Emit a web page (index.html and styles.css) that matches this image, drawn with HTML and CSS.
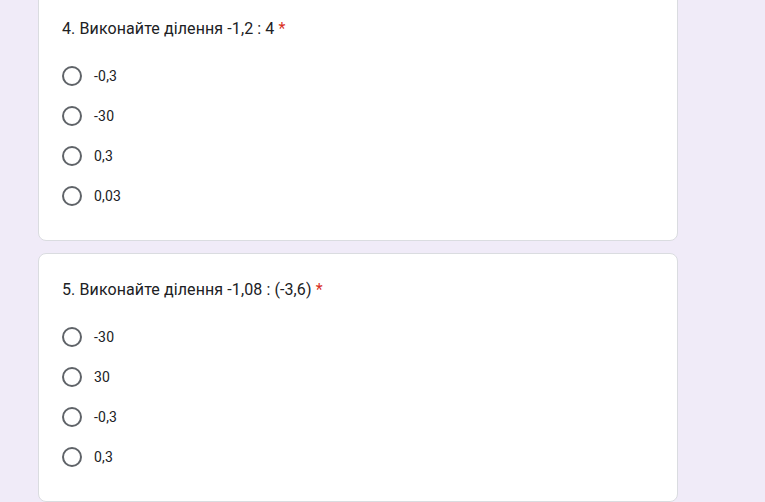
FILE: index.html
```html
<!DOCTYPE html>
<html lang="uk">
  <head>
    <meta charset="UTF-8" />
    <meta name="viewport" content="width=device-width, initial-scale=1.0" />
    <title>Тест</title>
    <link rel="stylesheet" href="styles.css">
  </head>
  <body>
    <div class="form">
      <div class="card">
        <div class="question">4. Виконайте ділення -1,2 : 4 <span class="required">*</span></div>
        <div class="options">
          <label class="option"><span class="radio"></span><span>-0,3</span></label>
          <label class="option"><span class="radio"></span><span>-30</span></label>
          <label class="option"><span class="radio"></span><span>0,3</span></label>
          <label class="option"><span class="radio"></span><span>0,03</span></label>
        </div>
      </div>

      <div class="card">
        <div class="question">5. Виконайте ділення -1,08 : (-3,6) <span class="required">*</span></div>
        <div class="options">
          <label class="option"><span class="radio"></span><span>-30</span></label>
          <label class="option"><span class="radio"></span><span>30</span></label>
          <label class="option"><span class="radio"></span><span>-0,3</span></label>
          <label class="option"><span class="radio"></span><span>0,3</span></label>
        </div>
      </div>
    </div>
  </body>
</html>
```

FILE: styles.css
```css
/* загальні стилі */
body {
  margin: 0;
  background-color: #f0ebf8;
  font-family: Roboto, "Liberation Sans", Arial, sans-serif;
  color: #202124;
}

.form {
  width: 640px;
  margin-left: 38px;
  margin-top: -8px;
  display: flex;
  flex-direction: column;
  gap: 12px;
}

.card {
  background-color: #ffffff;
  border: 1px solid #dadce0;
  border-radius: 8px;
  padding: 24px 23px 24px;
}

.question {
  font-size: 16px;
  line-height: 24px;
  letter-spacing: 0.1px;
  margin-bottom: 15px;
}

.required {
  color: #d93025;
}

.options {
  display: flex;
  flex-direction: column;
}

.option {
  display: flex;
  align-items: center;
  gap: 12px;
  height: 40px;
  font-size: 14px;
  letter-spacing: 0.2px;
}

.radio {
  width: 16px;
  height: 16px;
  border: 2px solid #5f6368;
  border-radius: 50%;
  flex-shrink: 0;
}
```
